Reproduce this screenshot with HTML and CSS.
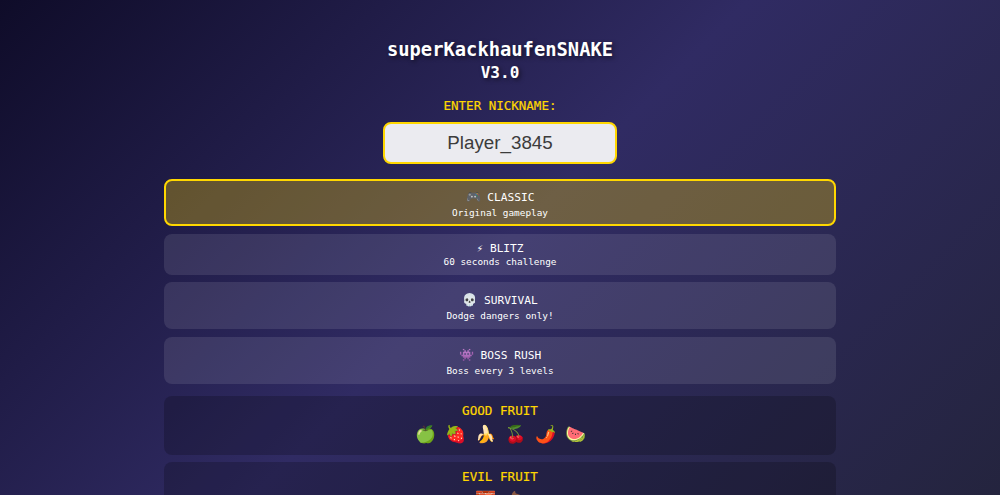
FILE: index.html
```html
<!DOCTYPE html>
<html lang="en">
<head>
    <meta charset="UTF-8">
    <meta name="viewport" content="width=device-width, initial-scale=1.0">
    <title>superKackhaufenSNAKE V3.0</title>
    <link rel="stylesheet" href="styles.css">
</head>
<body>
    <div class="container">
        <h1 class="title">superKackhaufenSNAKE<br><span class="version">V3.0</span></h1>
        <label class="nick-label" for="nick">ENTER NICKNAME:</label>
        <input class="nick-input" id="nick" type="text" value="Player_3845">
        <div class="modes">
            <button class="mode mode-active">
                <span class="mode-name"><span class="mode-icon">🎮</span> CLASSIC</span>
                <span class="mode-desc">Original gameplay</span>
            </button>
            <button class="mode">
                <span class="mode-name">⚡ BLITZ</span>
                <span class="mode-desc">60 seconds challenge</span>
            </button>
            <button class="mode">
                <span class="mode-name"><span class="mode-icon">💀</span> SURVIVAL</span>
                <span class="mode-desc">Dodge dangers only!</span>
            </button>
            <button class="mode">
                <span class="mode-name"><span class="mode-icon">👾</span> BOSS RUSH</span>
                <span class="mode-desc">Boss every 3 levels</span>
            </button>
        </div>
        <div class="fruit-box">
            <h3>GOOD FRUIT</h3>
            <div class="fruit-row">
                <span>🍏</span><span>🍓</span><span>🍌</span><span>🍒</span><span>🌶️</span><span>🍉</span>
            </div>
        </div>
        <div class="fruit-box">
            <h3>EVIL FRUIT</h3>
            <div class="fruit-row">
                <span>🧱</span><span>💩</span>
            </div>
        </div>
    </div>
</body>
</html>
```

FILE: styles.css
```css
html, body {
    margin: 0;
    padding: 0;
}
body {
    font-family: "DejaVu Sans Mono", monospace;
    background: linear-gradient(135deg, #0f0c29, #302b63, #24243e) fixed;
    color: #fff;
    min-height: 100vh;
}
.container {
    width: 672px;
    margin: 0 auto;
    padding: 39px 0 220px;
    display: flex;
    flex-direction: column;
    align-items: center;
}
.title {
    margin: 0 0 14px;
    font-size: 18.8px;
    line-height: 22px;
    font-weight: bold;
    text-align: center;
    text-shadow: 2px 2px 4px rgba(0, 0, 0, 0.5);
}
.version {
    font-size: 16px;
}
.nick-label {
    color: #ffd700;
    font-size: 12.5px;
    line-height: 16px;
    margin-bottom: 8px;
    -webkit-text-stroke: 0.2px #ffd700;
}
.nick-input {
    width: 234px;
    height: 42px;
    box-sizing: border-box;
    border: 2px solid #ffd700;
    border-radius: 8px;
    background: #ebebf0;
    color: #3c3c3c;
    font-family: "Liberation Sans", Arial, sans-serif;
    font-size: 18.8px;
    text-align: center;
    margin-bottom: 15px;
}
.modes {
    width: 100%;
    display: flex;
    flex-direction: column;
    gap: 7.67px;
}
.mode {
    display: flex;
    flex-direction: column;
    align-items: center;
    width: 100%;
    box-sizing: border-box;
    border: 2px solid transparent;
    border-radius: 8px;
    background: rgba(255, 255, 255, 0.1);
    color: #fff;
    font-family: inherit;
    padding: 6px 0 5px;
}
.mode-active {
    background: rgba(255, 215, 0, 0.3);
    border-color: #ffd700;
}
.mode-name {
    font-size: 11.2px;
    line-height: 14px;
}
.mode-icon {
    font-size: 12.2px;
    line-height: 20px;
}
.mode-desc {
    font-size: 9.4px;
    line-height: 12px;
}
.fruit-box {
    width: 100%;
    box-sizing: border-box;
    height: 59px;
    margin-top: 12px;
    padding-top: 7px;
    border-radius: 8px;
    background: rgba(0, 0, 0, 0.2);
    text-align: center;
}
.fruit-box + .fruit-box {
    margin-top: 7px;
}
.fruit-box h3 {
    margin: 0;
    color: #ffd700;
    font-size: 12.6px;
    font-weight: normal;
    line-height: 16px;
    -webkit-text-stroke: 0.2px #ffd700;
}
.fruit-row {
    display: flex;
    justify-content: center;
    gap: 10px;
    margin-top: 4px;
    font-size: 17px;
    line-height: 22px;
}
.fruit-row span {
    width: 20px;
    display: flex;
    justify-content: center;
}
```
